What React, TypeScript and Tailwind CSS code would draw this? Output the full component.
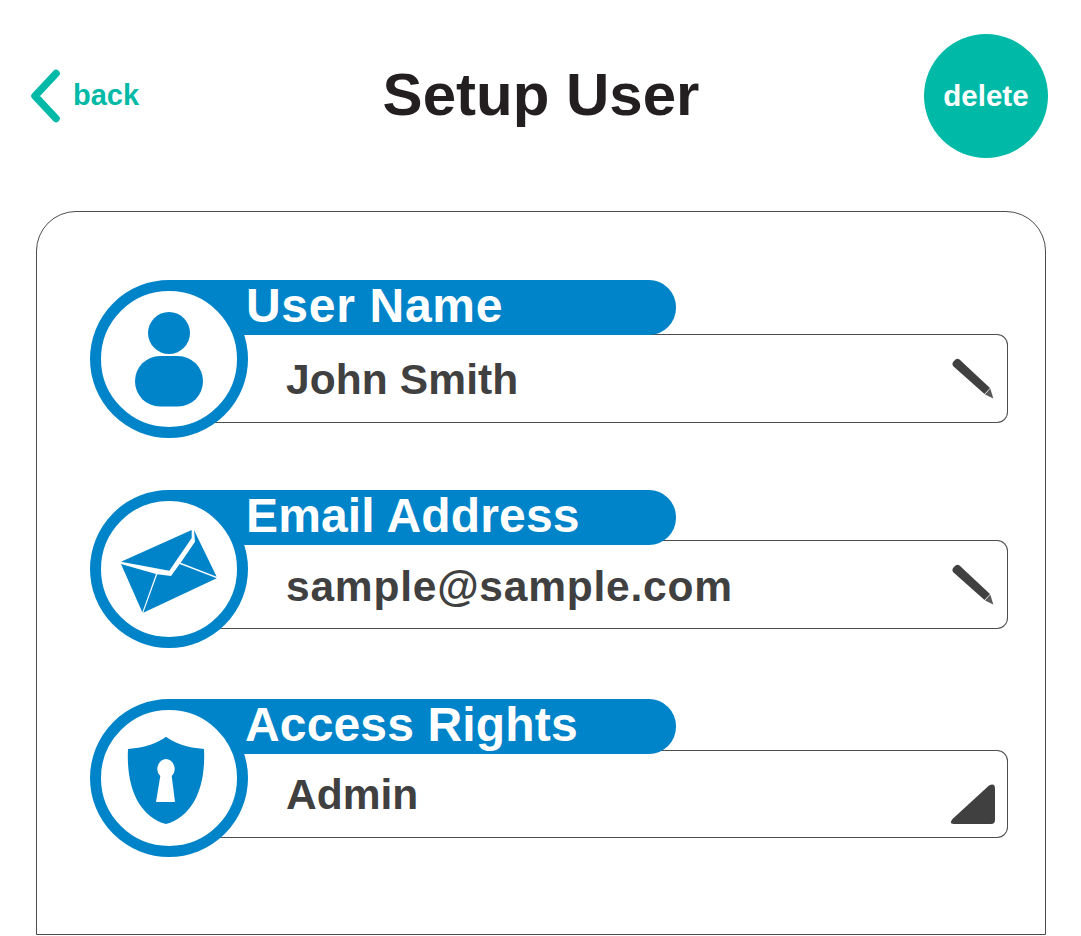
import React from "react";

function UserGlyph() {
  return (
    <svg width="158" height="158" viewBox="0 0 158 158">
      <circle cx="79" cy="53" r="21" fill="#0084c9" />
      <rect x="45" y="76" width="68" height="50.500" rx="25" fill="#0084c9" />
    </svg>
  );
}

function MailGlyph() {
  return (
    <svg width="158" height="158" viewBox="0 0 158 158">
      <path d="M31 71.700 L101.700 40 L101.700 48 L79.300 80.700 Z" fill="#0084c9" />
      <path d="M104 40 L126.700 86.700 L90.700 72.700 L105 51.700 Z" fill="#0084c9" />
      <path d="M31 74 L66 84 L52.300 122.300 Z" fill="#0084c9" />
      <path d="M67.300 84.300 L81 86 L89.700 74 L126.700 88.300 L53.300 122.700 Z" fill="#0084c9" />
    </svg>
  );
}

function ShieldGlyph() {
  return (
    <svg width="158" height="158" viewBox="0 0 158 158">
      <path
        fillRule="evenodd"
        d="M76 37.700 C68 44 55 48.500 38 50 C36 90 50 118 76 125 C102 118 116 90 114 50 C97 48.500 84 44 76 37.700 Z M76 60 A10 10 0 0 0 70.300 77 L66 103 L85 103 L81.700 77 A10 10 0 0 0 76 60 Z"
        fill="#0084c9"
      />
    </svg>
  );
}

function Pencil() {
  return (
    <svg width="44" height="44" viewBox="0 0 44 44">
      <path d="M3 4 L5.500 1.500 Q7.500 0 9.500 1.500 L40 30 L34.500 36 L3 8 Q1.800 6 3 4 Z" fill="#404041" />
      <path d="M40.300 30.600 L43.300 40.500 L35 36.500 Z" fill="#58595b" />
    </svg>
  );
}

function Triangle() {
  return (
    <svg width="46" height="41" viewBox="0 0 46 41">
      <path
        d="M39 1.500 Q45 -1.500 45 5 L45 36 Q45 40 41 40 L4 40 Q-1.500 40 2.500 35 Z"
        fill="#404041"
      />
    </svg>
  );
}

function Field({
  icon,
  label,
  value,
  right,
  gap,
  valueTop,
  boxStyle,
  labelLeft,
  labelTrack,
  valueTrack,
}: {
  icon: React.ReactNode;
  label: string;
  value: string;
  right: React.ReactNode;
  gap: string;
  valueTop: string;
  boxStyle: string;
  labelLeft: string;
  labelTrack: string;
  valueTrack: string;
}) {
  return (
    <div className={`relative h-[158px] w-[918px] ${gap}`}>
      <div className="absolute left-0 top-0 z-10 flex h-[158px] w-[158px] items-center justify-center rounded-full border-[11px] border-[#0084c9] bg-white">
        <div className="shrink-0">{icon}</div>
      </div>
      <div className="relative z-[1] ml-[80px] flex h-[55px] w-[506px] items-center rounded-r-[27px] bg-[#0084c9]">
        <span className={`mt-[-3px] text-[48px] font-bold leading-none text-white ${labelLeft} ${labelTrack}`}>{label}</span>
      </div>
      <div className={`ml-[100px] flex items-start justify-between rounded-r-[11px] border border-l-0 border-[#4d4d4f] bg-white ${boxStyle}`}>
        <span className={`pl-[96px] text-[42.500px] font-bold leading-none text-[#404041] ${valueTop} ${valueTrack}`}>{value}</span>
        {right}
      </div>
    </div>
  );
}

export default function App() {
  return (
    <div className="h-[936px] w-[1081px] overflow-hidden bg-white font-['Liberation_Sans',Arial,sans-serif]">
      <header className="flex h-[211px] items-start justify-between pl-[29px] pr-[33px] pt-[34px]">
        <div className="flex w-[201px] items-center gap-[12px] pt-[35px]">
          <svg width="32" height="54" viewBox="0 0 32 54">
            <path d="M27 4.500 L6 27 L27 49.500" fill="none" stroke="#00b9a7" strokeWidth="7.500" strokeLinecap="round" strokeLinejoin="round" />
          </svg>
          <span className="mt-[-2px] text-[29px] font-bold leading-none text-[#00b9a7]">back</span>
        </div>
        <h1 className="ml-[-72px] mt-[31px] text-[60px] font-bold leading-none text-[#231f20]">Setup User</h1>
        <button className="flex h-[124px] w-[124px] items-center justify-center rounded-full bg-[#00b9a7] text-[29.500px] font-bold leading-none text-white">
          delete
        </button>
      </header>
      <main className="ml-[36px] h-[724px] w-[1010px] rounded-t-[40px] border border-[#4d4d4f] pl-[53px] pt-[68px]">
        <Field
          icon={<UserGlyph />}
          label="User Name"
          value="John Smith"
          labelLeft="pl-[76px]"
          labelTrack="tracking-[0.700px]"
          valueTrack="tracking-[0.100px]"
          gap="mb-[52px]"
          boxStyle="mt-[-1px] h-[89px]"
          valueTop="pt-[24px]"
          right={<div className="mr-[13px] mt-[23px]"><Pencil /></div>}
        />
        <Field
          icon={<MailGlyph />}
          label="Email Address"
          value="sample@sample.com"
          labelLeft="pl-[76px]"
          labelTrack="tracking-[0.150px]"
          valueTrack="tracking-[0.780px]"
          gap="mb-[51px]"
          boxStyle="mt-[-5px] h-[89px]"
          valueTop="pt-[25px]"
          right={<div className="mr-[13px] mt-[23px]"><Pencil /></div>}
        />
        <Field
          icon={<ShieldGlyph />}
          label="Access Rights"
          value="Admin"
          labelLeft="pl-[75px]"
          labelTrack="tracking-[0.150px]"
          valueTrack=""
          gap=""
          boxStyle="mt-[-4px] h-[88px]"
          valueTop="pt-[23px]"
          right={<div className="mr-[11px] mt-[33px]"><Triangle /></div>}
        />
      </main>
    </div>
  );
}
